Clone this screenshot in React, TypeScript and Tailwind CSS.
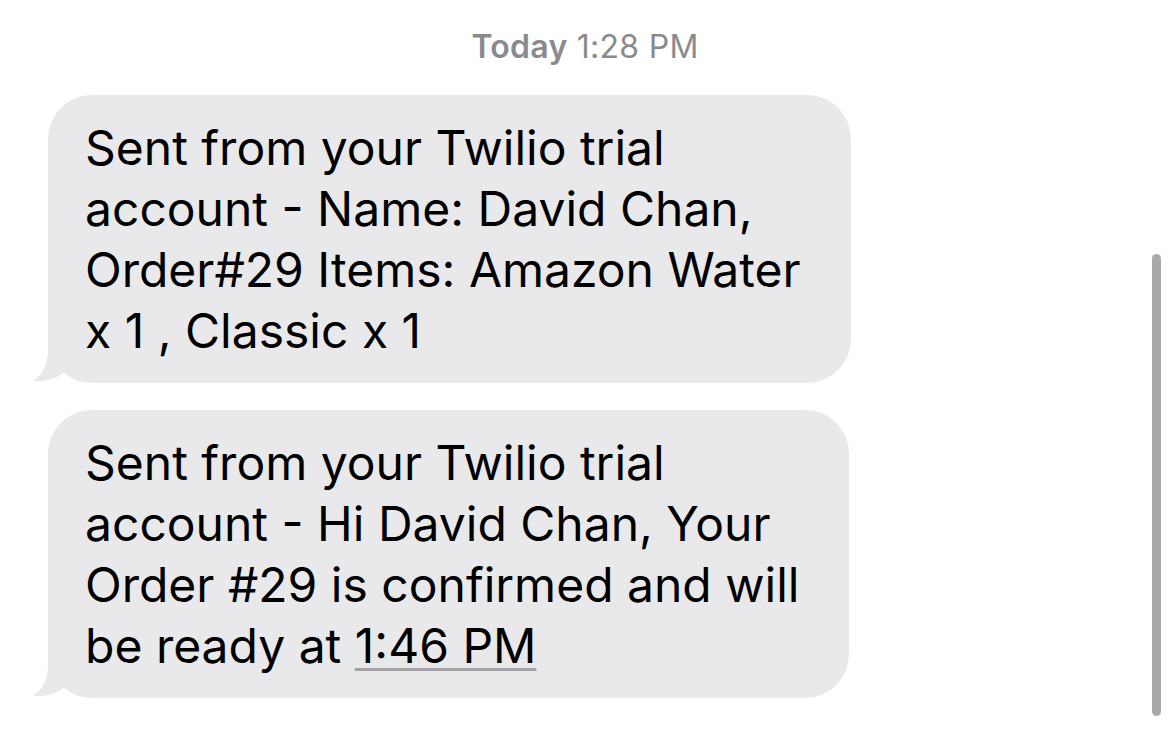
import React from "react";

function Tail() {
  return (
    <svg
      className="absolute left-[-15px] bottom-0"
      width="70"
      height="42"
      viewBox="0 0 70 42"
    >
      <path
        d="M15,0 L15,8 C15,24 9,34 0,40 C12,41 26,37 35,29 C44,37 54,42 70,42 L70,0 Z"
        fill="#e9e9eb"
      />
    </svg>
  );
}

function Bubble({ children }: { children: React.ReactNode }) {
  return (
    <div className="relative w-fit ml-[48px]">
      <Tail />
      <div className="relative bg-[#e9e9eb] rounded-[44px] pl-[37px] pr-[50px] pt-[22px] pb-[22px] text-[48px] leading-[61px] text-black">
        {children}
      </div>
    </div>
  );
}

export default function App() {
  return (
    <div
      className="relative w-[1170px] h-[740px] bg-white overflow-hidden"
      style={{ fontFamily: "Inter, 'Liberation Sans', sans-serif" }}
    >
      {/* timestamp */}
      <div className="flex justify-center pt-[29px] pb-[30px] text-[32px] leading-[36px] tracking-[0.3px] text-[#8a8a8e]">
        <span className="font-semibold">Today</span>
        <span className="ml-[9px]">1:28 PM</span>
      </div>

      <div className="flex flex-col gap-[27px]">
        <Bubble>
          Sent from your Twilio trial
          <br />
          account - Name: David Chan,
          <br />
          Order#29 Items: Amazon Water
          <br />x 1 , Classic x 1
        </Bubble>
        <Bubble>
          Sent from your Twilio trial
          <br />
          account - Hi David Chan, Your
          <br />
          Order #29 is confirmed and will
          <br />
          be ready at{" "}
          <span className="underline decoration-[#a3a3a7] decoration-[3px] underline-offset-[5px]">
            1:46 PM
          </span>
        </Bubble>
      </div>

      {/* scrollbar */}
      <div className="absolute left-[1152px] top-[254px] w-[9px] h-[462px] rounded-full bg-[#a9a9ab]" />
    </div>
  );
}
